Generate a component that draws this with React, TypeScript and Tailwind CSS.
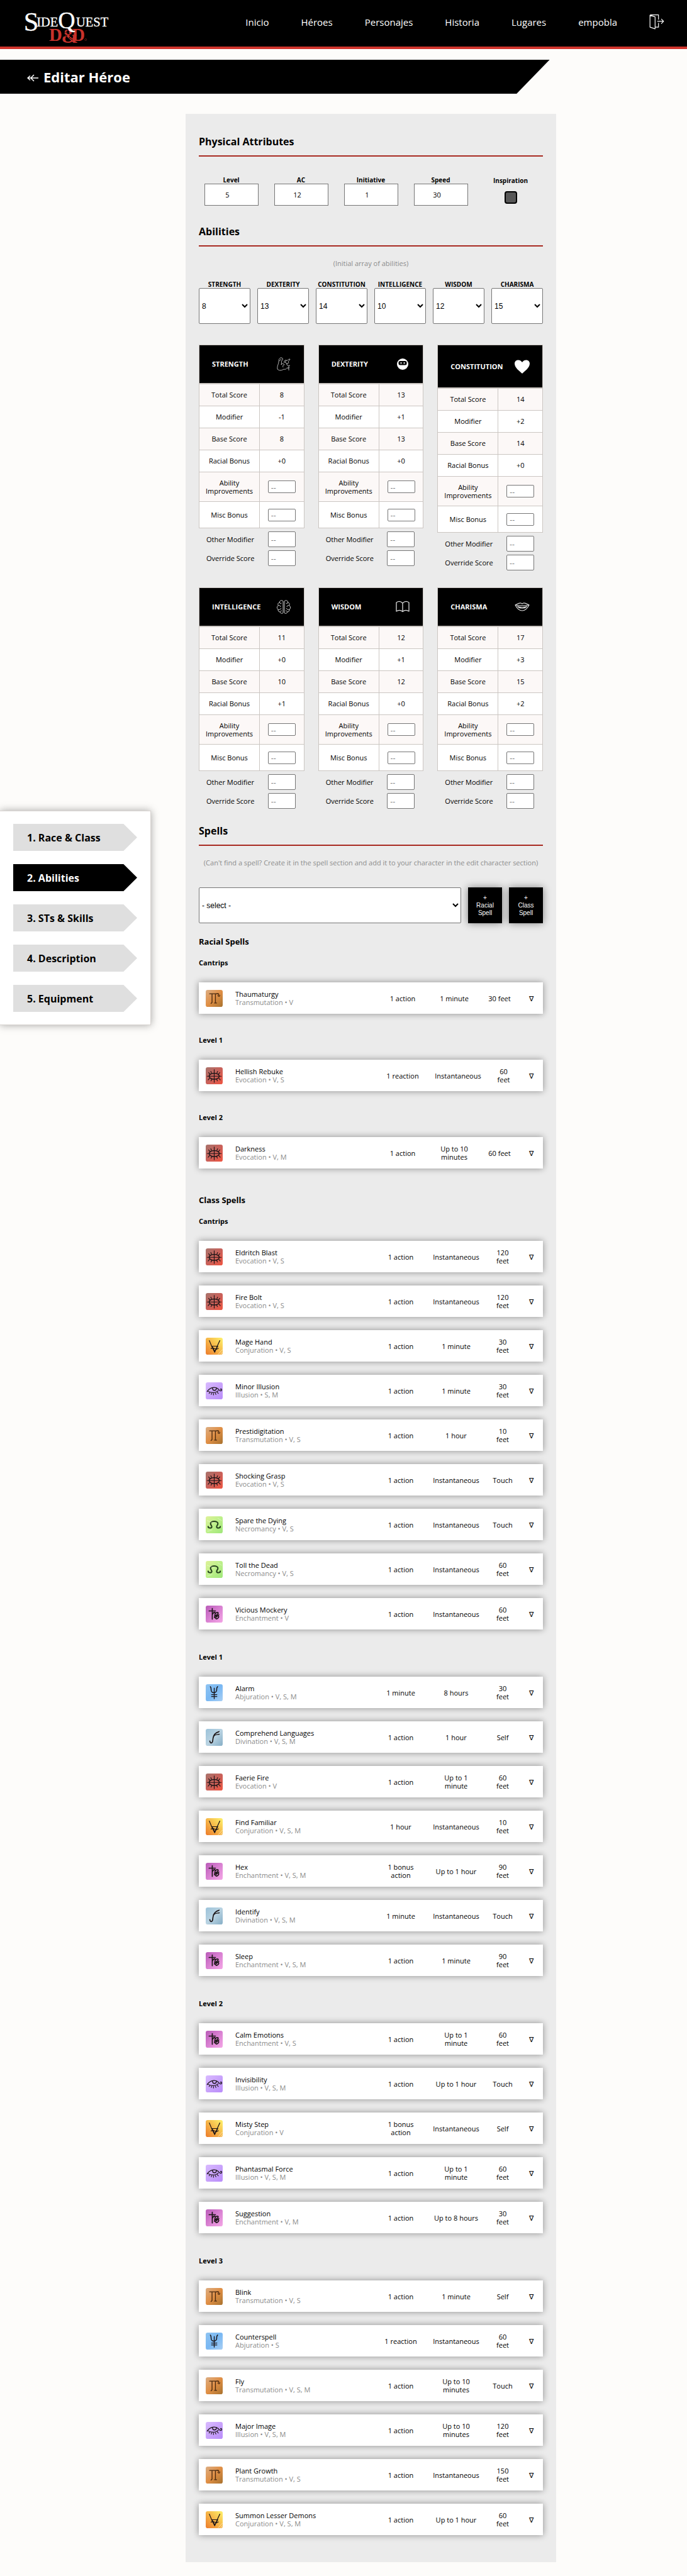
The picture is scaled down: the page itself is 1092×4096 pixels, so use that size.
import { Fragment } from "react";
import type { ReactNode } from "react";

type School =
  | "Transmutation"
  | "Evocation"
  | "Conjuration"
  | "Illusion"
  | "Necromancy"
  | "Enchantment"
  | "Abjuration"
  | "Divination";

type Spell = {
  name: string;
  school: School;
  components: string;
  time: string;
  duration: string;
  range: string;
};

const spell = (
  name: string,
  school: School,
  components: string,
  time: string,
  duration: string,
  range: string,
): Spell => ({ name, school, components, time, duration, range });

const racialSpells: { level: string; spells: Spell[] }[] = [
  { level: "Cantrips", spells: [spell("Thaumaturgy", "Transmutation", "V", "1 action", "1 minute", "30 feet")] },
  { level: "Level 1", spells: [spell("Hellish Rebuke", "Evocation", "V, S", "1 reaction", "Instantaneous", "60\nfeet")] },
  { level: "Level 2", spells: [spell("Darkness", "Evocation", "V, M", "1 action", "Up to 10\nminutes", "60 feet")] },
];

const classSpells: { level: string; spells: Spell[] }[] = [
  {
    level: "Cantrips",
    spells: [
      spell("Eldritch Blast", "Evocation", "V, S", "1 action", "Instantaneous", "120\nfeet"),
      spell("Fire Bolt", "Evocation", "V, S", "1 action", "Instantaneous", "120\nfeet"),
      spell("Mage Hand", "Conjuration", "V, S", "1 action", "1 minute", "30\nfeet"),
      spell("Minor Illusion", "Illusion", "S, M", "1 action", "1 minute", "30\nfeet"),
      spell("Prestidigitation", "Transmutation", "V, S", "1 action", "1 hour", "10\nfeet"),
      spell("Shocking Grasp", "Evocation", "V, S", "1 action", "Instantaneous", "Touch"),
      spell("Spare the Dying", "Necromancy", "V, S", "1 action", "Instantaneous", "Touch"),
      spell("Toll the Dead", "Necromancy", "V, S", "1 action", "Instantaneous", "60\nfeet"),
      spell("Vicious Mockery", "Enchantment", "V", "1 action", "Instantaneous", "60\nfeet"),
    ],
  },
  {
    level: "Level 1",
    spells: [
      spell("Alarm", "Abjuration", "V, S, M", "1 minute", "8 hours", "30\nfeet"),
      spell("Comprehend Languages", "Divination", "V, S, M", "1 action", "1 hour", "Self"),
      spell("Faerie Fire", "Evocation", "V", "1 action", "Up to 1\nminute", "60\nfeet"),
      spell("Find Familiar", "Conjuration", "V, S, M", "1 hour", "Instantaneous", "10\nfeet"),
      spell("Hex", "Enchantment", "V, S, M", "1 bonus\naction", "Up to 1 hour", "90\nfeet"),
      spell("Identify", "Divination", "V, S, M", "1 minute", "Instantaneous", "Touch"),
      spell("Sleep", "Enchantment", "V, S, M", "1 action", "1 minute", "90\nfeet"),
    ],
  },
  {
    level: "Level 2",
    spells: [
      spell("Calm Emotions", "Enchantment", "V, S", "1 action", "Up to 1\nminute", "60\nfeet"),
      spell("Invisibility", "Illusion", "V, S, M", "1 action", "Up to 1 hour", "Touch"),
      spell("Misty Step", "Conjuration", "V", "1 bonus\naction", "Instantaneous", "Self"),
      spell("Phantasmal Force", "Illusion", "V, S, M", "1 action", "Up to 1\nminute", "60\nfeet"),
      spell("Suggestion", "Enchantment", "V, M", "1 action", "Up to 8 hours", "30\nfeet"),
    ],
  },
  {
    level: "Level 3",
    spells: [
      spell("Blink", "Transmutation", "V, S", "1 action", "1 minute", "Self"),
      spell("Counterspell", "Abjuration", "S", "1 reaction", "Instantaneous", "60\nfeet"),
      spell("Fly", "Transmutation", "V, S, M", "1 action", "Up to 10\nminutes", "Touch"),
      spell("Major Image", "Illusion", "V, S, M", "1 action", "Up to 10\nminutes", "120\nfeet"),
      spell("Plant Growth", "Transmutation", "V, S", "1 action", "Instantaneous", "150\nfeet"),
      spell("Summon Lesser Demons", "Conjuration", "V, S, M", "1 action", "Up to 1 hour", "60\nfeet"),
    ],
  },
];

const schoolArt: Record<School, { from: string; mid: string; to: string; glyph: ReactNode }> = {
  Evocation: {
    from: "#a8736c",
    mid: "#c9615a",
    to: "#ef5440",
    glyph: (
      <>
        <ellipse cx="17.5" cy="18.5" rx="10.5" ry="6.2" strokeWidth="2" />
        <path d="M3 18.5H32M17.5 5V31M12 12L10.500 8.500M23 12L24.500 8.500M8.500 14L6 11M26.500 14L29 11M8 22.500L5 26M27 22.500L30 26M12.500 24.500L11 28M22.500 24.500L24 28" strokeWidth="1.500" />
      </>
    ),
  },
  Conjuration: {
    from: "#ec7c2c",
    mid: "#f6b648",
    to: "#fff36c",
    glyph: (
      <>
        <path d="M7.500 6L12 17L18.500 30L24 17L29 6" strokeWidth="1.600" />
        <path d="M13 17.500H25L18.500 28ZM11 22.500L15 21L22 24L26 22" strokeWidth="1.600" />
        <path d="M26 34L34 25M31 34L34 30" stroke="#ffffff" strokeOpacity="0.700" strokeWidth="1" />
      </>
    ),
  },
  Illusion: {
    from: "#d9bbff",
    mid: "#c9a3fb",
    to: "#b98cfa",
    glyph: (
      <>
        <path d="M3 19C9 10 20 8 26 14C29 18 33 19 33 15.500C33 13.500 31 13 30.500 14.500" strokeWidth="1.600" />
        <path d="M4 18C11 22 20 23 26 17" strokeWidth="1.400" />
        <path d="M14 12C14 18 22 18 22 12" strokeWidth="1.800" />
        <path d="M8 21L7 23M12 22.500L11.500 25M16 23L16 26M20 22.500L21 25M24 20.500L26 23" strokeWidth="1.500" />
      </>
    ),
  },
  Transmutation: {
    from: "#dcae84",
    mid: "#e08f45",
    to: "#a8722e",
    glyph: (
      <>
        <path d="M8 8H26M13 8V26L11 28M20 8V26M18 27H22.500" strokeWidth="1.800" stroke="#4b2a10" />
        <path d="M23 8C28 7 28 10 25 12C27 15 29 13 29 11" strokeWidth="1.600" stroke="#4b2a10" />
      </>
    ),
  },
  Necromancy: {
    from: "#dff29a",
    mid: "#bdf08a",
    to: "#9fe77a",
    glyph: (
      <>
        <path d="M5 21C5 25 12 25 12.500 22C13 19 9 18 10 14C12 9 23 9 25 14C26 18 22 19 22.500 22C23 25 30 25 30 21" strokeWidth="2.600" stroke="#27431f" />
        <path d="M3 9L17 14M25 4L33 9M4 31L13 28" stroke="#ffffff" strokeOpacity="0.500" strokeWidth="1" />
      </>
    ),
  },
  Enchantment: {
    from: "#b95bb8",
    mid: "#d981d2",
    to: "#f4a6e6",
    glyph: (
      <path d="M7 11H20M13.500 6V28M13.500 19C15 14 20 12 19.500 16L18 25M20 16C24 12 28 15 24 18L19 22C23 19 29 21 26 25C23 29 19 27 21 24L27 19" strokeWidth="2.200" />
    ),
  },
  Abjuration: {
    from: "#8fc4f2",
    mid: "#79b8f3",
    to: "#a9cff4",
    glyph: (
      <>
        <path d="M9.500 5C13 8 9 14 13 16.500C17 19 22 17 22.500 13C23 9 21.500 8 24.500 5" strokeWidth="1.900" />
        <path d="M17.500 8V30M12 21.500H23M12 25.500H23" strokeWidth="1.700" />
      </>
    ),
  },
  Divination: {
    from: "#9cc3da",
    mid: "#b9d3e2",
    to: "#86aec6",
    glyph: (
      <>
        <path d="M8.500 25C9 31 14 30 14.500 24C15 15 17 11 22 8C25 6 26 7 27.500 5.500" strokeWidth="2.200" />
        <path d="M16 15C20 11 24 12 28 11" strokeWidth="1.900" />
      </>
    ),
  },
};

function SchoolIcon({ school, id }: { school: School; id: string }) {
  const art = schoolArt[school];
  return (
    <svg viewBox="0 0 35 35" className="h-[27px] w-[27px]" role="img" aria-label={school}>
      <defs>
        <linearGradient id={id} x1="0" y1={school === "Conjuration" ? "1" : "0"} x2="1" y2={school === "Conjuration" ? "0" : "1"}>
          <stop offset="0" stopColor={art.from} />
          <stop offset="0.500" stopColor={art.mid} />
          <stop offset="1" stopColor={art.to} />
        </linearGradient>
      </defs>
      <rect width="35" height="35" rx="4" fill={`url(#${id})`} />
      <g fill="none" stroke="#1c1517" strokeLinecap="round" strokeLinejoin="round">
        {art.glyph}
      </g>
    </svg>
  );
}

function Logo() {
  return (
    <svg viewBox="-4 -14 194 88" className="h-[67px] w-[147px] overflow-visible" role="img" aria-label="SideQuest D&D">
      <g fill="#c8322b" fontFamily="Liberation Serif, serif" fontWeight="bold">
        <text x="50" y="64" fontSize="38">D</text>
        <text x="98" y="64" fontSize="38">D</text>
        <text x="76" y="67" fontSize="42">&amp;</text>
      </g>
      <path d="M77 38L84 46L79 47L88 53L80 54M90 40L86 46L95 50M102 48L92 57L100 62" stroke="#000" strokeWidth="1.200" fill="none" />
      <circle cx="127" cy="61" r="2" stroke="#8a2822" strokeWidth="0.800" fill="none" />
      <g fill="#fff" stroke="#fff" strokeWidth="0.400" fontFamily="Liberation Serif, serif">
        <text x="-3" y="42" fontSize="56">S</text>
        <text x="24" y="33" fontSize="27">IDE</text>
        <text x="69" y="37" fontSize="50">Q</text>
        <text x="107" y="33" fontSize="27">UEST</text>
      </g>
    </svg>
  );
}

function ExitIcon() {
  return (
    <svg viewBox="0 0 31 31" className="h-6 w-6" fill="none" stroke="#fff" strokeWidth="1.500" strokeLinejoin="round" strokeLinecap="round" aria-hidden="true">
      <path d="M1.500 1.500L12 5V29.500L1.500 26ZM1.500 1.500L3 .8H19V10M12 26H19V18" />
      <path d="M17 14H29.500M25 9.500L29.500 14L25 18.500" />
    </svg>
  );
}

const iconClass = "h-6 w-6";
const abilityIcons: Record<string, ReactNode> = {
  STRENGTH: (
    <svg viewBox="0 0 24 24" className={iconClass} fill="none" stroke="#ddd" strokeWidth="0.800" aria-hidden="true">
      <path d="M2 20C1 15 4 12 4 8C4 4 6 1 9 2C11 3 11 5 9 6C8 8 9 10 8 13M5 7L8 4M8 13C10 10 12 11 13 13C11 13 10 15 11 17M13 10C12 7 14 5 16 6C19 7 18 4 22 4C21 6 20 7 19 8C21 9 19 12 17 11M16 6L14 9L17 11C16 14 19 15 22 14M2 20C5 23 9 22 12 20C15 21 17 19 18 17M20 15V22M18 19L21 17" />
    </svg>
  ),
  DEXTERITY: (
    <svg viewBox="0 0 24 24" className={iconClass} aria-hidden="true">
      <circle cx="12" cy="12" r="9" fill="#fff" />
      <rect x="5.500" y="7" width="13" height="6.500" rx="2.500" fill="#000" />
      <path d="M9.500 9V11.500M14.500 9V11.500" stroke="#fff" strokeWidth="1.600" />
    </svg>
  ),
  CONSTITUTION: (
    <svg viewBox="0 0 24 24" className={iconClass} fill="#fff" aria-hidden="true">
      <path d="M12 23C8 19 0 14 0 7C0 1 8-1 12 5C16-1 24 1 24 7C24 14 16 19 12 23Z" />
    </svg>
  ),
  INTELLIGENCE: (
    <svg viewBox="0 0 24 24" className={iconClass} fill="none" stroke="#ddd" strokeWidth="0.900" aria-hidden="true">
      <path d="M11 3C9 .5 5 2 5.500 5C3 5 2 8 3.500 10C.5 11 1 15 3 16C2.500 19 5 20 6 20C7 23 11 23 11 21ZM13 3C15 .5 19 2 18.500 5C21 5 22 8 20.500 10C23.500 11 23 15 21 16C21.500 19 19 20 18 20C17 23 13 23 13 21Z" />
      <path d="M5.500 5C6 7 8 7 8.500 6M3.500 10C5 9 7 10 7 12M3 16C5 17 7 16 8 14M18.500 5C18 7 16 7 15.500 6M20.500 10C19 9 17 10 17 12M21 16C19 17 17 16 16 14M6 20C7 19 8 18 9 18M18 20C17 19 16 18 15 18" />
    </svg>
  ),
  WISDOM: (
    <svg viewBox="0 0 24 24" className={iconClass} fill="none" stroke="#ddd" strokeWidth="1.300" strokeLinejoin="round" aria-hidden="true">
      <path d="M12 6C9 3 5 3 2 5V19C5 17 9 17 12 19.500C15 17 19 17 22 19V5C19 3 15 3 12 6V19.500" />
    </svg>
  ),
  CHARISMA: (
    <svg viewBox="0 0 24 24" className={iconClass} fill="none" stroke="#ddd" strokeWidth="1.200" strokeLinejoin="round" aria-hidden="true">
      <path d="M1 9C5 7 8 5 10 6L12 7L14 6C16 5 19 7 23 9C20 15 17 18 12 18C7 18 4 15 1 9ZM1 9C6 10 18 10 23 9M4 11C8 13 16 13 20 11M5 12C9 15 15 15 19 12" />
    </svg>
  ),
};

type Ability = { name: string; total: string; mod: string; base: string; racial: string; tall?: boolean };

const abilityRows: Ability[][] = [
  [
    { name: "STRENGTH", total: "8", mod: "-1", base: "8", racial: "+0" },
    { name: "DEXTERITY", total: "13", mod: "+1", base: "13", racial: "+0" },
    { name: "CONSTITUTION", total: "14", mod: "+2", base: "14", racial: "+0", tall: true },
  ],
  [
    { name: "INTELLIGENCE", total: "11", mod: "+0", base: "10", racial: "+1" },
    { name: "WISDOM", total: "12", mod: "+1", base: "12", racial: "+0" },
    { name: "CHARISMA", total: "17", mod: "+3", base: "15", racial: "+2" },
  ],
];

const initialScores = [
  ["STRENGTH", "8"],
  ["DEXTERITY", "13"],
  ["CONSTITUTION", "14"],
  ["INTELLIGENCE", "10"],
  ["WISDOM", "12"],
  ["CHARISMA", "15"],
];

const smallInput =
  "block w-11 rounded-xs border border-[#767676] bg-white px-1 text-[11px] leading-none placeholder:font-['DejaVu_Sans'] placeholder:text-[#757575] mx-auto";

function SectionTitle({ children }: { children: ReactNode }) {
  return <h2 className="border-b-2 border-[#a82a22] pb-2.5 text-base leading-6 font-bold">{children}</h2>;
}

function AbilityCard({ ability }: { ability: Ability }) {
  const stats = [
    ["Total Score", ability.total],
    ["Modifier", ability.mod],
    ["Base Score", ability.base],
    ["Racial Bonus", ability.racial],
  ];
  return (
    <div className="text-[11px] leading-[14px]">
      <div className="border border-[#cbc6c2] bg-white">
        <div className={`flex items-center justify-between bg-black px-5 text-white ${ability.tall ? "h-[67px]" : "h-[60px]"}`}>
          <h3 className="text-[11px] font-bold">{ability.name}</h3>
          <span className="flex w-6 justify-center">{abilityIcons[ability.name]}</span>
        </div>
        <table className="w-full table-fixed border-separate border-spacing-0 border-t-2 border-[#cbc6c2] text-center">
          <colgroup>
            <col className="w-[58%]" />
            <col className="w-[42%]" />
          </colgroup>
          <tbody>
            {stats.map(([label, value], i) => (
              <tr key={label} className={i % 2 === 0 ? "h-[35px] bg-[#fcf8f7]" : "h-[35px] bg-white"}>
                <th scope="row" className="border-r border-b border-[#cbc6c2] p-0 font-medium">{label}</th>
                <td className="border-b border-[#cbc6c2] p-0">{value}</td>
              </tr>
            ))}
            <tr className="h-[47px] bg-[#fcf8f7]">
              <th scope="row" className="border-r border-b border-[#cbc6c2] p-0 leading-[13px] font-medium">
                <label htmlFor={`${ability.name}-improve`}>Ability<br />Improvements</label>
              </th>
              <td className="border-b border-[#cbc6c2] p-0">
                <input id={`${ability.name}-improve`} placeholder="--" className={`${smallInput} h-5`} />
              </td>
            </tr>
            <tr className="h-[41px] bg-white">
              <th scope="row" className="border-r border-[#cbc6c2] p-0 font-medium">
                <label htmlFor={`${ability.name}-misc`}>Misc Bonus</label>
              </th>
              <td className="p-0">
                <input id={`${ability.name}-misc`} placeholder="--" className={`${smallInput} h-5`} />
              </td>
            </tr>
          </tbody>
        </table>
      </div>
      {["Other Modifier", "Override Score"].map((label) => (
        <label key={label} className="mt-[5px] flex items-center justify-between pr-3.5 pl-3">
          {label}
          <span>
            <input placeholder="--" className={`${smallInput} h-[25px]`} />
          </span>
        </label>
      ))}
    </div>
  );
}

function SpellRow({ item, id, racial }: { item: Spell; id: string; racial: boolean }) {
  const wide = racial && item.range.endsWith(" feet");
  const columns = wide
    ? "grid-cols-[47px_1fr_82px_82px_62px_38px]"
    : racial
      ? "grid-cols-[47px_1fr_80px_96px_49px_38px]"
      : "grid-cols-[47px_1fr_80px_96px_52px_38px]";
  return (
    <li className={`grid h-[50px] items-center bg-white pl-[11px] text-center text-[11px] leading-[13px] whitespace-pre-line shadow-[0_0_10px_rgba(0,0,0,0.4)] ${columns}`}>
      <SchoolIcon school={item.school} id={id} />
      <div className="text-left">
        <p>{item.name}</p>
        <p className="text-[#8b8b8b]">{`${item.school} • ${item.components}`}</p>
      </div>
      <p>{item.time}</p>
      <p>{item.duration}</p>
      <p>{item.range}</p>
      <button type="button" aria-label={`Show ${item.name}`} className="h-full w-full">∇</button>
    </li>
  );
}

function SpellSection({ title, groups, racial = false }: { title: string; groups: { level: string; spells: Spell[] }[]; racial?: boolean }) {
  return (
    <section className={racial ? "mt-5" : "mt-[41px]"}>
      <h3 className="text-[13px] leading-[18px] font-bold">{title}</h3>
      {groups.map((group, i) => (
        <Fragment key={group.level}>
          <h4 className={`text-[11px] leading-4 font-bold ${i === 0 ? "mt-[17px]" : racial ? "mt-[34px]" : "mt-9"}`}>{group.level}</h4>
          <ul className="mt-[23px] flex flex-col gap-[21px]">
            {group.spells.map((item, j) => (
              <SpellRow key={item.name} item={item} id={`${racial ? "r" : "c"}${i}-${j}`} racial={racial} />
            ))}
          </ul>
        </Fragment>
      ))}
    </section>
  );
}

const steps = ["1. Race & Class", "2. Abilities", "3. STs & Skills", "4. Description", "5. Equipment"];
const links = ["Inicio", "Héroes", "Personajes", "Historia", "Lugares", "empobla"];

export default function App() {
  return (
    <div className="min-h-screen bg-[#fdfcfa] font-['Open_Sans','Noto_Sans',sans-serif] font-medium text-black">
      <header className="flex h-[78px] justify-between border-b-4 border-[#d0342c] bg-black pr-9 pl-[37px] text-white">
        <a href="#" className="mt-1.5">
          <Logo />
        </a>
        <nav className="flex h-[70px] items-center gap-[51px] text-[15px]">
          {links.map((link) => (
            <a key={link} href="#">{link}</a>
          ))}
          <button type="button" aria-label="Salir">
            <ExitIcon />
          </button>
        </nav>
      </header>

      <div className="mt-[17px] flex h-[54px] w-4/5 items-center bg-black pl-[43px] text-white [clip-path:polygon(0_0,100%_0,94%_100%,0_100%)]">
        <a href="#" aria-label="Volver">
          <svg viewBox="0 0 18 12" className="mt-1 mr-2 h-3 w-[18px]" fill="none" stroke="#fff" strokeWidth="1.500" aria-hidden="true">
            <path d="M1 6H18M5 2.500L1 6L5 9.500M11 1L6 6L11 11" />
          </svg>
        </a>
        <h1 className="text-[22px] font-bold">Editar Héroe</h1>
      </div>

      <div className="mt-8 flex items-start pb-[21px]">
        <aside className="mt-[1108px] w-60 shrink-0 border border-l-0 border-[#d9d4d1] bg-white px-[21px] py-5 shadow-[0_0_12px_rgba(0,0,0,0.35)]">
          <nav className="flex flex-col gap-[21px]">
            {steps.map((step) => (
              <a
                key={step}
                href="#"
                className={`flex h-[43px] items-center pl-[22px] text-base font-bold [clip-path:polygon(0_0,89%_0,100%_50%,89%_100%,0_100%)] ${step.startsWith("2") ? "bg-black text-white" : "bg-[#dfdfdf]"}`}
              >
                {step}
              </a>
            ))}
          </nav>
        </aside>

        <main className="mr-52 ml-[55px] min-w-0 flex-1 bg-[#ebebeb] px-[21px] pt-8 pb-[43px]">
          <SectionTitle>Physical Attributes</SectionTitle>
          <div className="mt-[31px] flex justify-center gap-[25px] text-center text-[10px] leading-3 font-bold">
            {[["Level", "5"], ["AC", "12"], ["Initiative", "1"], ["Speed", "30"]].map(([label, value]) => (
              <label key={label} className="w-[86px]">
                {label}
                <input defaultValue={value} className="block h-[35px] w-full border border-[#767676] bg-white pr-3 text-center text-[11px] font-medium" />
              </label>
            ))}
            <label className="flex w-[86px] flex-col items-center gap-[11px] pt-px">
              Inspiration
              <input type="checkbox" className="h-5 w-5 appearance-none rounded-sm border-2 border-black bg-[#575757]" />
            </label>
          </div>

          <div className="mt-[29px]">
            <SectionTitle>Abilities</SectionTitle>
          </div>
          <p className="mt-5 text-center text-[11px] leading-[14px] text-[#8b8b8b]">(Initial array of abilities)</p>
          <div className="mt-5 grid grid-cols-6 gap-[11px] text-center text-[10px] leading-3 font-bold">
            {initialScores.map(([label, value]) => (
              <label key={label}>
                {label}
                <select className="block h-[57px] w-full rounded-xs border border-[#767676] bg-white font-['Liberation_Sans',sans-serif] text-xs font-normal">
                  <option>{value}</option>
                </select>
              </label>
            ))}
          </div>

          <div className="mt-[33px] flex flex-col gap-[27px]">
            {abilityRows.map((row) => (
              <div key={row[0].name} className="grid grid-cols-3 items-start gap-[22px]">
                {row.map((ability) => (
                  <AbilityCard key={ability.name} ability={ability} />
                ))}
              </div>
            ))}
          </div>

          <div className="mt-[23px]">
            <SectionTitle>Spells</SectionTitle>
          </div>
          <p className="mt-5 text-center text-[11px] leading-[14px] whitespace-nowrap text-[#8b8b8b]">
            (Can't find a spell? Create it in the spell section and add it to your character in the edit character section)
          </p>
          <div className="mt-8 flex gap-[11px] font-['Liberation_Sans',sans-serif]">
            <select aria-label="Spell" className="h-[57px] min-w-0 flex-1 rounded-xs border border-[#767676] bg-white text-xs font-normal">
              <option>- select -</option>
            </select>
            {["Racial", "Class"].map((kind) => (
              <button key={kind} type="button" className="w-[54px] bg-black text-[10px] leading-3 whitespace-pre-line text-white shadow-[0_0_12px_rgba(0,0,0,0.45)]">
                {`+\n${kind}\nSpell`}
              </button>
            ))}
          </div>

          <SpellSection title="Racial Spells" groups={racialSpells} racial />
          <SpellSection title="Class Spells" groups={classSpells} />
        </main>
      </div>
    </div>
  );
}
